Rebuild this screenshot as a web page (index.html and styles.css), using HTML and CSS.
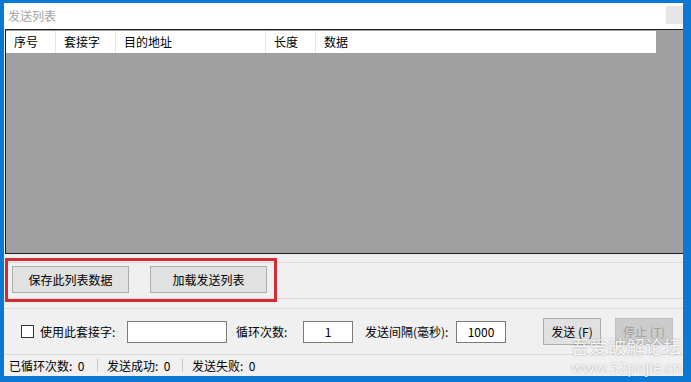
FILE: index.html
```html
<!DOCTYPE html>
<html lang="zh-CN">
<head>
    <meta charset="UTF-8">
    <title>发送列表</title>
    <link rel="stylesheet" href="styles.css">
</head>
<body>

    <div class="window">
        <div class="titlebar">
            <span class="title">发送列表</span>
            <span class="title-btn"></span>
        </div>

        <div class="list">
            <div class="list-head">
                <div class="col col-no">序号</div>
                <div class="col col-sock">套接字</div>
                <div class="col col-addr">目的地址</div>
                <div class="col col-len">长度</div>
                <div class="col col-data">数据</div>
            </div>
        </div>

        <div class="tools">
            <button class="btn btn-wide">保存此列表数据</button>
            <button class="btn btn-wide btn-load">加载发送列表</button>
        </div>

        <div class="controls">
            <span class="check"></span>
            <span class="label label-sock">使用此套接字:</span>
            <input class="field field-sock" type="text" value="">
            <span class="label label-loop">循环次数:</span>
            <input class="field field-num" type="text" value="1">
            <span class="label label-gap">发送间隔(毫秒):</span>
            <input class="field field-num" type="text" value="1000">
            <button class="btn btn-send">发送 (F)</button>
            <button class="btn btn-stop" disabled>停止 (T)</button>
        </div>

        <div class="statusbar">
            <span class="stat stat-loop">已循环次数:&nbsp; 0</span>
            <span class="sep"></span>
            <span class="stat stat-ok">发送成功:&nbsp; 0</span>
            <span class="sep"></span>
            <span class="stat">发送失败:&nbsp; 0</span>
        </div>

        <!-- 标注框和水印 -->
        <div class="mark"></div>
        <div class="watermark">
            <div class="wm-name">吾爱破解论坛</div>
            <div class="wm-url">www.52pojie.cn</div>
        </div>
    </div>

</body>
</html>
```

FILE: styles.css
```css
body {
    margin: 0;
    width: 691px;
    height: 382px;
    background-color: #0b78d4;
    font-family: "Noto Sans CJK SC", "Microsoft YaHei", sans-serif;
    font-size: 12px;
    color: #000;
    overflow: hidden;
}
.window {
    position: relative;
    margin: 3px 0 0 4px;
    width: 679px;
    height: 373px;
    background-color: #f0f0f0;
    display: flex;
    flex-direction: column;
}
.titlebar {
    height: 26px;
    background-color: #fff;
    display: flex;
    align-items: center;
    padding-left: 4px;
}
.title {
    color: #a3a3a3;
    line-height: 16px;
}
.title-btn {
    margin-left: auto;
    margin-top: -2px;
    width: 17px;
    height: 18px;
    background-color: #e6e6e6;
}
.list {
    margin-left: 1px;
    height: 223px;
    border: 1px solid #1c1c1c;
    border-right: none;
    background-color: #a0a0a0;
}
.list-head {
    margin-top: 1px;
    width: 650px;
    height: 22px;
    background-color: #fff;
    display: flex;
}
.col {
    box-sizing: border-box;
    padding-left: 8px;
    line-height: 22px;
    border-right: 1px solid #e5e5e5;
}
.col-no { width: 50px; }
.col-sock { width: 60px; }
.col-addr { width: 150px; }
.col-len { width: 50px; }
.col-data { flex: 1; border-right: none; }

.tools {
    margin-top: 8px;
    height: 35px;
    border-top: 1px solid #dadada;
    border-bottom: 1px solid #dadada;
    display: flex;
    align-items: flex-start;
    padding-left: 8px;
}
.btn {
    box-sizing: border-box;
    height: 27px;
    padding: 0;
    font-family: inherit;
    font-size: 12px;
    color: #000;
    background-color: #e1e1e1;
    border: 1px solid #adadad;
}
.btn-wide {
    margin-top: 3px;
    width: 117px;
}
.btn-load {
    margin-left: 21px;
}
.controls {
    margin-top: 9px;
    height: 45px;
    border-top: 1px solid #dadada;
    border-bottom: 1px solid #dadada;
    display: flex;
    align-items: center;
    padding-left: 17px;
}
.check {
    box-sizing: border-box;
    width: 13px;
    height: 13px;
    border: 1px solid #333;
    background-color: #fff;
    margin-right: 6px;
    flex: none;
}
.label {
    flex: none;
    white-space: nowrap;
}
.label-sock { width: 87px; }
.label-loop { width: 67px; margin-left: 9px; }
.label-gap { width: 91px; margin-left: 12px; }
.field {
    box-sizing: border-box;
    height: 22px;
    border: 1px solid #7a7a7a;
    background-color: #fff;
    font-family: inherit;
    font-size: 12px;
    padding: 0 4px;
    flex: none;
}
.field-sock { width: 100px; }
.field-num {
    width: 50px;
    text-align: center;
}
.btn-send {
    width: 58px;
    margin-left: 37px;
}
.btn-stop {
    width: 58px;
    margin-left: 14px;
    color: #a0a0a0;
    background-color: #cccccc;
    border-color: #bfbfbf;
}
.statusbar {
    flex: 1;
    display: flex;
    align-items: center;
    padding-left: 5px;
    padding-bottom: 1px;
}
.stat-loop { width: 88px; }
.stat-ok { width: 75px; }
.sep {
    width: 1px;
    height: 13px;
    background-color: #c9c9c9;
    margin-right: 9px;
}
.mark {
    position: absolute;
    left: 1px;
    top: 255px;
    width: 272px;
    height: 44px;
    box-sizing: border-box;
    border: 3px solid #d42a33;
}
.watermark {
    position: absolute;
    left: 567px;
    top: 331px;
    color: rgba(255, 255, 255, 0.9);
    text-shadow: 0 0 2px rgba(0, 0, 0, 0.35);
    text-align: center;
}
.wm-name {
    font-size: 18px;
    letter-spacing: 0.5px;
    line-height: 24px;
}
.wm-url {
    font-family: "Open Sans", "Liberation Sans", sans-serif;
    font-size: 15px;
    line-height: 18px;
}
```
